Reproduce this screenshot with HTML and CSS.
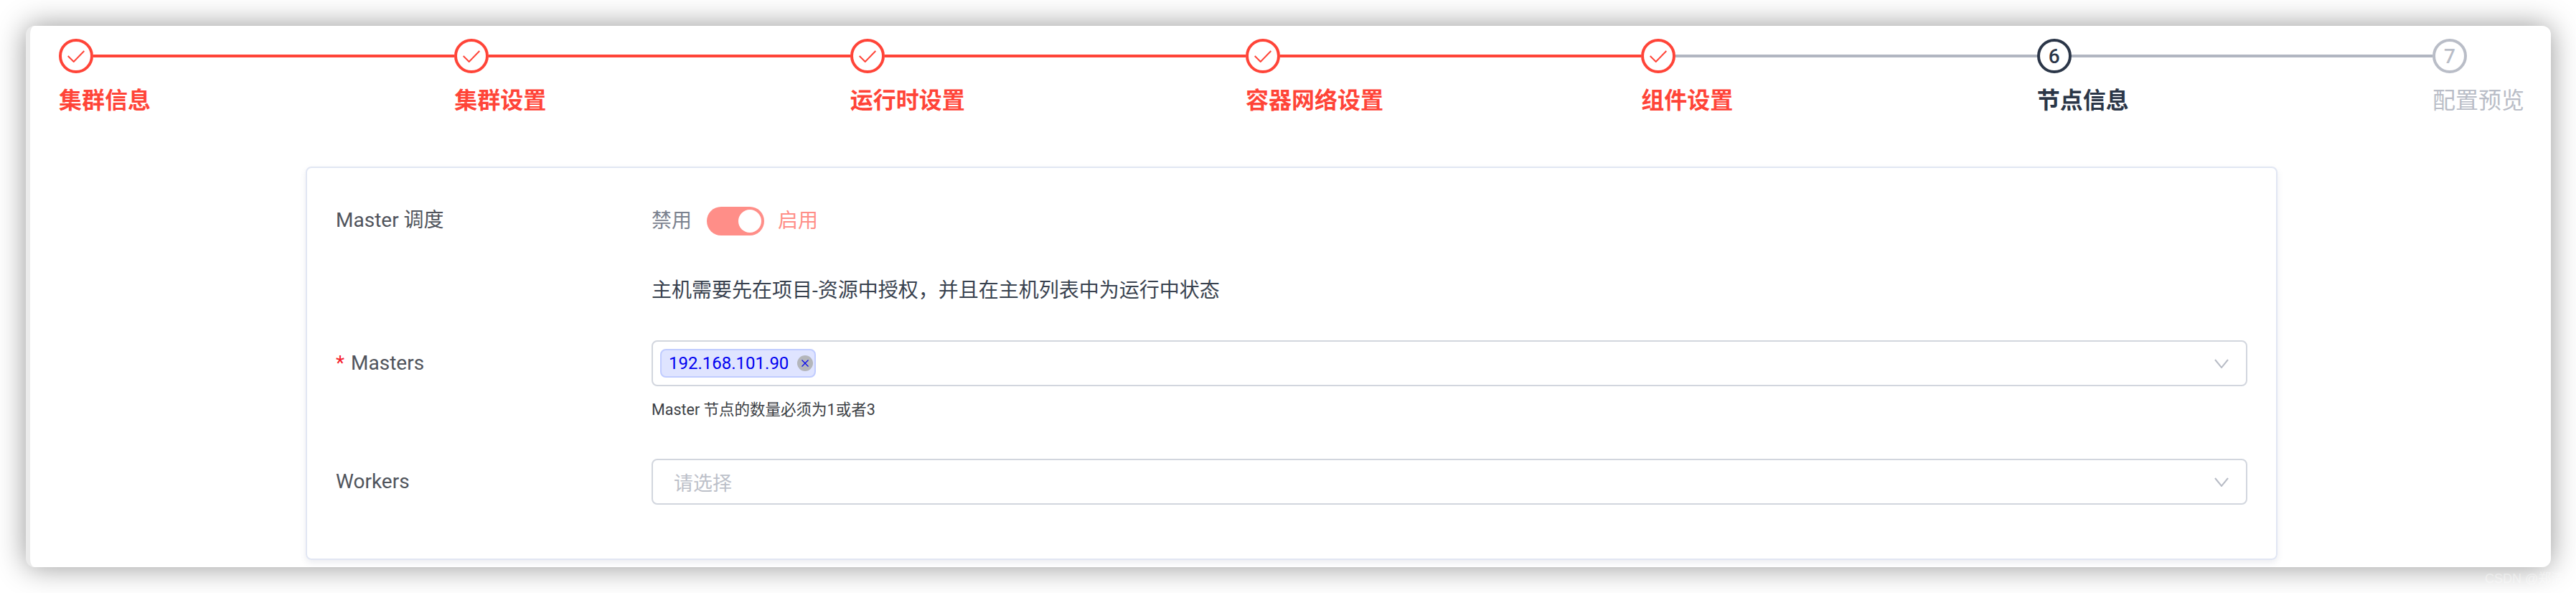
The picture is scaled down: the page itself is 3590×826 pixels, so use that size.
FILE: index.html
```html
<!DOCTYPE html>
<html lang="zh-CN">
<head>
<meta charset="utf-8">
<title>节点信息</title>
<link rel="stylesheet" href="styles.css">
</head>
<body>
<main class="window">
  <ol class="steps">
    <li class="step done">
      <div class="step-head"><span class="dot"><svg class="check" viewBox="0 0 24 17"><path d="M.7 8l8 8L23.3 1"/></svg></span><span class="line"></span></div>
      <div class="step-label">集群信息</div>
    </li>
    <li class="step done">
      <div class="step-head"><span class="dot"><svg class="check" viewBox="0 0 24 17"><path d="M.7 8l8 8L23.3 1"/></svg></span><span class="line"></span></div>
      <div class="step-label">集群设置</div>
    </li>
    <li class="step done">
      <div class="step-head"><span class="dot"><svg class="check" viewBox="0 0 24 17"><path d="M.7 8l8 8L23.3 1"/></svg></span><span class="line"></span></div>
      <div class="step-label">运行时设置</div>
    </li>
    <li class="step done">
      <div class="step-head"><span class="dot"><svg class="check" viewBox="0 0 24 17"><path d="M.7 8l8 8L23.3 1"/></svg></span><span class="line"></span></div>
      <div class="step-label">容器网络设置</div>
    </li>
    <li class="step done last-done">
      <div class="step-head"><span class="dot"><svg class="check" viewBox="0 0 24 17"><path d="M.7 8l8 8L23.3 1"/></svg></span><span class="line"></span></div>
      <div class="step-label">组件设置</div>
    </li>
    <li class="step active">
      <div class="step-head"><span class="dot">6</span><span class="line"></span></div>
      <div class="step-label">节点信息</div>
    </li>
    <li class="step pending">
      <div class="step-head"><span class="dot">7</span></div>
      <div class="step-label">配置预览</div>
    </li>
  </ol>

  <section class="card">
    <div class="row row-switch">
      <label class="label">Master 调度</label>
      <div class="switch-group">
        <span class="off-text">禁用</span>
        <span class="switch"><span class="knob"></span></span>
        <span class="on-text">启用</span>
      </div>
    </div>
    <div class="row row-note">
      <span class="label"></span>
      <p class="note">主机需要先在项目-资源中授权，并且在主机列表中为运行中状态</p>
    </div>
    <div class="row row-masters">
      <label class="label label-field"><span class="required">*</span>Masters</label>
      <div class="select">
        <span class="tag">192.168.101.90<span class="tag-close"><svg viewBox="0 0 12 12"><path d="M1.5 1.5l9 9M10.5 1.5l-9 9"/></svg></span></span>
        <svg class="chevron" viewBox="0 0 20 13"><path d="M1 1l9 11 9-11"/></svg>
      </div>
    </div>
    <div class="row row-hint">
      <span class="label"></span>
      <p class="hint">Master 节点的数量必须为1或者3</p>
    </div>
    <div class="row row-workers">
      <label class="label label-field">Workers</label>
      <div class="select">
        <span class="placeholder">请选择</span>
        <svg class="chevron" viewBox="0 0 20 13"><path d="M1 1l9 11 9-11"/></svg>
      </div>
    </div>
  </section>
</main>
<div class="watermark">CSDN @郑清</div>
</body>
</html>
```
FILE: styles.css
```css
* { box-sizing: border-box; }
html, body { margin: 0; height: 826px; overflow: hidden; }
body {
  padding: 36px 35px 36px 36px;
  background: #fff;
  font-family: Roboto, "Noto Sans CJK SC", sans-serif;
}
.window {
  height: 754px;
  padding: 18px 39px 0 40px;
  background: #fff;
  border-left: 6px solid #ebebeb;
  border-radius: 12px;
  box-shadow: 0 0 40px rgba(0, 0, 0, .42);
}
.steps { display: flex; list-style: none; margin: 0; padding: 0; }
.step { flex: 1 1 0; min-width: 0; }
.step.pending { flex: 0 0 126px; }
.step-head { display: flex; align-items: center; height: 48px; }
.dot {
  flex: none;
  display: flex;
  align-items: center;
  justify-content: center;
  width: 48px;
  height: 48px;
  border: 4px solid currentColor;
  border-radius: 50%;
  font-size: 28px;
  font-weight: 500;
}
.check { width: 24px; height: 17px; }
.check path { fill: none; stroke: currentColor; stroke-width: 2; }
.line { flex: 1; height: 4px; background: #ff4438; }
.step-label { margin-top: 22px; font-size: 32px; line-height: 32px; font-weight: 700; white-space: nowrap; }
.done { color: #ff4438; }
.last-done .line, .active .line { background: #b1b6c1; }
.active { color: #2b3648; }
.pending { color: #b9bdc7; }
.pending .step-label { font-weight: 400; }

.card {
  height: 548px;
  margin: 76px 342px 0 344px;
  padding: 54px 40px 0 40px;
  border: 2px solid #e1e6f3;
  border-radius: 8px;
  box-shadow: 0 4px 8px rgba(70, 80, 120, .1);
}
.row { display: flex; align-items: center; }
.label { flex: none; width: 440px; font-size: 28px; line-height: 36px; color: #50545c; padding-bottom: 3px; }
.label-field { padding-bottom: 1px; }
.required { color: #f5222d; margin-right: 9px; }
.row-note { margin-top: 57px; }
.row-masters { margin-top: 49px; }
.row-hint { margin-top: 21px; }
.row-workers { margin-top: 56px; }

.switch-group { display: flex; align-items: center; font-size: 28px; line-height: 40px; }
.off-text { color: #7b828f; }
.on-text { color: #ff8e88; }
.switch { display: flex; justify-content: flex-end; align-items: center; width: 80px; height: 40px; margin: 0 19px 0 21px; padding: 0 4px; background: #ff8e88; border-radius: 20px; }
.knob { width: 32px; height: 32px; background: #fff; border-radius: 50%; }

.note { margin: 0; font-size: 28px; line-height: 40px; color: #39424f; }
.hint { margin: 0; font-size: 21.5px; line-height: 24px; color: #3c3f45; }

.select {
  flex: 1;
  display: flex;
  align-items: center;
  justify-content: space-between;
  height: 64px;
  padding: 0 24px 0 10px;
  border: 2px solid #d2d6de;
  border-radius: 8px;
  background: #fff;
}
.tag {
  display: flex;
  align-items: center;
  height: 40px;
  padding: 0 2px 0 10px;
  border: 2px solid #c0ccff;
  border-radius: 8px;
  background: #dfe4ff;
  color: #0000f0;
  font-size: 24px;
}
.tag-close {
  display: flex;
  align-items: center;
  justify-content: center;
  width: 22px;
  height: 22px;
  margin-left: 12px;
  border-radius: 50%;
  background: #b4b6bb;
}
.tag-close svg { width: 12px; height: 12px; }
.tag-close path { fill: none; stroke: #0000f0; stroke-width: 1.2; }
.placeholder { margin-left: 19px; font-size: 27px; color: #bcc0c9; }
.chevron { flex: none; width: 20px; height: 13px; }
.chevron path { fill: none; stroke: #b8bcc6; stroke-width: 2; }

.watermark {
  position: absolute;
  left: 3463px;
  top: 795px;
  font-family: "Liberation Sans", "Noto Sans CJK SC", sans-serif;
  font-size: 18px;
  line-height: 22px;
  color: rgba(255, 255, 255, .4);
  white-space: nowrap;
}
```
